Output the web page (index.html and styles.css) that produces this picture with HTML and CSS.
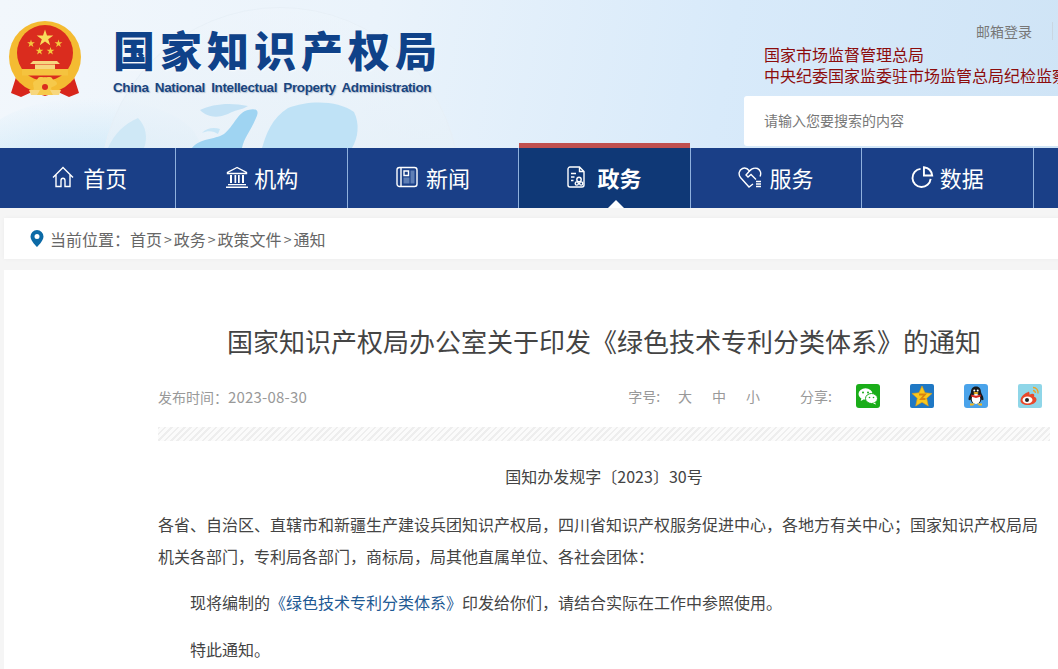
FILE: index.html
```html
<!DOCTYPE html>
<html lang="zh-CN">
<head>
    <meta charset="utf-8">
    <title>国家知识产权局办公室关于印发《绿色技术专利分类体系》的通知</title>
    <link rel="stylesheet" href="styles.css">
</head>
<body>
    <!-- Header banner -->
    <header class="banner">
        <!-- Globe picture behind the logo -->
        <svg class="globe" width="660" height="148" viewBox="0 0 660 148">
            <defs>
                <clipPath id="globe-clip"><circle cx="280" cy="187" r="180"/></clipPath>
                <radialGradient id="glow" cx="0.5" cy="1" r="1">
                    <stop offset="0" stop-color="#bfe3f7"/>
                    <stop offset="1" stop-color="#bfe3f7" stop-opacity="0"/>
                </radialGradient>
                <linearGradient id="globe-fill" x1="0" y1="0" x2="0" y2="1">
                    <stop offset="0" stop-color="#eef5fb" stop-opacity="0.5"/>
                    <stop offset="1" stop-color="#dbe9f3"/>
                </linearGradient>
            </defs>
            <ellipse cx="90" cy="148" rx="110" ry="50" fill="url(#glow)"/>
            <circle cx="280" cy="187" r="180" fill="url(#globe-fill)"/>
            <g clip-path="url(#globe-clip)">
                <path d="M192 148c8-10 22-8 32-14 10-8 14-22 24-24 8-2 12 0 8 8-6 14-12 20-14 30z" fill="#9fd4f2"/>
                <path d="M218 134c-4-3-10-4-16-1 4-5 12-6 18-4z" fill="#c8e6f7"/>
                <path d="M200 110c12-6 30-8 48-4-6 4-14 4-20 8-10 4-20 4-28-4z" fill="#c4e2f5"/>
                <path d="M262 148c4-14 10-30 26-40 20-8 50-8 66 4 6 12 4 26-2 36z" fill="#bfe2f6"/>
                <path d="M108 148c6-14 16-24 30-30 8 8 10 20 6 30z" fill="#cfe8f6"/>
            </g>
            <circle cx="280" cy="187" r="179.500" fill="none" stroke="#e6eff6" stroke-opacity="0.8"/>
        </svg>
        <div class="wrap banner-inner">
            <div class="logo">
                <svg class="emblem" width="76" height="78" viewBox="7 20 76 78">
                    <path d="M17 74 L11 93 L21 97 L32 92 L45 96 L58 92 L69 97 L79 93 L73 74Z" fill="#d8261c"/>
                    <circle cx="45" cy="57" r="36" fill="#f4bb32"/>
                    <circle cx="45" cy="53" r="28" fill="#da2c1e"/>
                    <path d="M45 29.500l2 6h6.300l-5.100 3.700 2 6-5.200-3.700-5.200 3.700 2-6-5.100-3.700h6.300z" fill="#f8dc5c"/>
                    <path d="M31 39.500l.9 2.800h3l-2.400 1.800.9 2.800-2.400-1.700-2.400 1.700.9-2.800-2.400-1.800h3z" fill="#f3c83e"/>
                    <path d="M58.500 39.500l.9 2.800h3l-2.400 1.800.9 2.800-2.400-1.700-2.400 1.700.9-2.800-2.400-1.800h3z" fill="#f3c83e"/>
                    <path d="M39.500 47l.9 2.800h3L41 51.600l.9 2.800-2.400-1.700-2.400 1.700.9-2.800-2.400-1.800h3z" fill="#f3c83e"/>
                    <path d="M50.500 47l.9 2.800h3L52 51.600l.9 2.800-2.400-1.700-2.400 1.700.9-2.800-2.400-1.800h3z" fill="#f3c83e"/>
                    <path d="M33 61h24l3 3H30zM35 64.500h20V69H35z" fill="#f7d77e"/>
                    <path d="M22 69h46v6.500H22z" fill="#f5c33f"/>
                    <path d="M17 74c6 7 16 11 28 11s22-4 28-11l1 5c-7 6-17 10-29 10s-22-4-29-10z" fill="#f4bb32"/>
                    <path d="M33 84c0-4 4-3 5-6 2-2 5 0 7-1 2 1 5-1 7 1 1 3 5 2 5 6-2 3-5 2-6 4 1 3 2 5 3 7H31c1-2 2-4 3-7-1-2 0-1-1-4z" fill="#f6c94a"/>
                    <path d="M29 90h11l-3 5h-6zM61 90H50l3 5h6z" fill="#f7d77e"/>
                    <circle cx="45" cy="87" r="3" fill="#da2c1e"/>
                </svg>
                <div class="logo-text">
                    <div class="logo-cn">国家知识产权局</div>
                    <div class="logo-en">China National Intellectual Property Administration</div>
                </div>
            </div>
            <div class="banner-right">
                <div class="login"><a class="login-link">邮箱登录</a></div>
                <div class="org">国家市场监督管理总局</div>
                <div class="org org-long">中央纪委国家监委驻市场监管总局纪检监察组</div>
                <div class="search">请输入您要搜索的内容</div>
            </div>
        </div>
    </header>

    <!-- Main navigation -->
    <nav class="nav">
        <ul class="wrap nav-list">
            <li class="nav-item">
                <svg class="nav-icon icon-home" width="22" height="24" viewBox="0 0 22 24"><path d="M1 12.500 11 2.500l10 10M4 10v11.500h5v-6c0-1.300.8-2.200 2-2.200s2 .9 2 2.200v6h5V10"/></svg>
                首页
            </li>
            <li class="nav-item">
                <svg class="nav-icon icon-bank" width="24" height="24" viewBox="0 0 24 24"><path d="M12 2.500 2.500 7.500v1h19v-1z"/><path class="icon-solid" d="M5 10h2v8H5zM9.500 10h1.700v8H9.500zM13 10h1.700v8H13zM17 10h2v8h-2zM3 19h18v1.300H3zM1 21.500h22V23H1z"/></svg>
                机构
            </li>
            <li class="nav-item">
                <svg class="nav-icon icon-news" width="22" height="24" viewBox="0 0 22 24"><rect x="1" y="2.500" width="20" height="19" rx="2.500"/><path d="M5 2.500v19"/><path d="M8 6h4.500v4.500H8z"/><path class="icon-fill" d="M14.500 5.500h4v13h-4zM7.500 12.500h6v6h-6z"/></svg>
                新闻
            </li>
            <li class="nav-item nav-active">
                <svg class="nav-icon icon-doc" width="18" height="22" viewBox="0 0 18 22"><path d="M12.500 1H3C2 1 1 2 1 3v16c0 1 1 2 2 2h12c1 0 2-1 2-2V5.500zM12.500 1v4.500H17M4 7.500h5M4 11h3.500M4 14.500h2.500"/><circle cx="12" cy="13.500" r="2.200"/><circle cx="9.800" cy="17.500" r="1.600"/><circle cx="14.200" cy="17.500" r="1.600"/></svg>
                政务
                <span class="nav-arrow"></span>
            </li>
            <li class="nav-item">
                <svg class="nav-icon icon-heart" width="24" height="22" viewBox="0 0 24 22"><path d="M15 18 11 21 2.500 11.500C0 8.500 1 4 4.500 2.500 7 1.500 9.500 2.500 11.500 5c2-2.500 5.500-3.500 8-2.500 3 1.300 4 5 2.500 8"/><path d="M11.500 5 8 9l2 2 3-2.500 5 5M18 15.500h5M18 18h5M18 20.500h5"/></svg>
                服务
            </li>
            <li class="nav-item">
                <svg class="nav-icon icon-thick icon-pie" width="23" height="24" viewBox="0 0 24 24"><path d="M10 3.500a9.500 9.500 0 1 0 10.500 10.500"/><path d="M13.500 1.800c4.500.6 8 4 8.600 8.700h-8.600z"/></svg>
                数据
            </li>
            <li class="nav-item">互动</li>
        </ul>
    </nav>

    <!-- Breadcrumb -->
    <div class="wrap crumb">
        <svg class="pin" width="14" height="17" viewBox="0 0 14 17"><path fill-rule="evenodd" d="M7 0a6.500 6.500 0 0 1 6.500 6.500C13.500 11 7 17 7 17S.5 11 .5 6.500A6.500 6.500 0 0 1 7 0zm0 4a2.500 2.500 0 1 0 0 5 2.500 2.500 0 0 0 0-5z"/></svg>
        <span class="crumb-label">当前位置：</span>
        <a>首页</a><i>&gt;</i><a>政务</a><i>&gt;</i><a>政策文件</a><i>&gt;</i><a>通知</a>
    </div>

    <!-- Article -->
    <main class="wrap article">
        <h1 class="title">国家知识产权局办公室关于印发《绿色技术专利分类体系》的通知</h1>
        <div class="meta">
            <span class="date">发布时间：<span class="date-num">2023-08-30</span></span>
            <div class="tools">
                <span class="size-label">字号:</span>
                <span class="size">大</span><span class="size">中</span><span class="size">小</span>
                <span class="share-label">分享:</span>
                <svg class="share" width="24" height="24" viewBox="0 0 24 24">
                    <rect width="24" height="24" rx="3" fill="#1aad19"/>
                    <ellipse cx="9.500" cy="10" rx="7" ry="5.800" fill="#fff"/>
                    <path d="M5.500 14l-.8 3 3-1.500z" fill="#fff"/>
                    <ellipse cx="15.500" cy="14.500" rx="6" ry="5" fill="#fff" stroke="#1aad19"/>
                    <path d="M19 18.500l1 2-3-1z" fill="#fff"/>
                    <circle cx="7" cy="8.500" r="1" fill="#1aad19"/><circle cx="12" cy="8.500" r="1" fill="#1aad19"/>
                    <circle cx="13.500" cy="13.500" r=".8" fill="#1aad19"/><circle cx="17.500" cy="13.500" r=".8" fill="#1aad19"/>
                </svg>
                <svg class="share" width="24" height="24" viewBox="0 0 24 24">
                    <rect width="24" height="24" rx="2" fill="#1f78c4"/>
                    <path d="M12 2l3 6.800 7 .7-5.300 4.700L18.300 22 12 18.200 5.700 22l1.600-7.800L2 9.500l7-.7z" fill="#f8c81e" stroke="#e09a14" stroke-width=".6"/>
                    <path d="M9 10.500h6l-4 4.500h4.500" fill="none" stroke="#d9820f" stroke-width="1.800"/>
                </svg>
                <svg class="share" width="24" height="24" viewBox="0 0 24 24">
                    <rect width="24" height="24" rx="3" fill="#4aa3ea"/>
                    <path d="M12 2.500c-3.500 0-5 2.500-5 5.500 0 1.500-2.500 4-2.500 7 0 1.500 1 1.500 2 .5.500 2 1.500 3 2 3.500h7c.500-.5 1.500-1.500 2-3.500 1 1 2 1 2-.5 0-3-2.500-5.500-2.500-7 0-3-1.500-5.500-5-5.500z" fill="#17191c"/>
                    <ellipse cx="12" cy="15" rx="4.300" ry="5" fill="#fff"/>
                    <path d="M7.500 10.500c3 1.500 6 1.500 9 0l.5 2-5 1.500-5-1.500z" fill="#d8281e"/>
                    <ellipse cx="12" cy="9" rx="2.500" ry="1" fill="#f5b81c"/>
                    <path d="M6 19.500h5l-2 2H6zM13 19.500h5v2h-3z" fill="#f5b81c"/>
                    <circle cx="10.300" cy="6.500" r="1" fill="#fff"/><circle cx="13.700" cy="6.500" r="1" fill="#fff"/>
                </svg>
                <svg class="share" width="24" height="24" viewBox="0 0 24 24">
                    <rect width="24" height="24" rx="2" fill="#8fd6e8"/>
                    <path d="M10.500 8c-4 1-8 5-8 8.500 0 2.500 3 4.500 7.500 4.500s8.500-2.500 8.500-5.500c0-1.500-1.500-2.500-2.500-2.700.7-1.800 0-3-1.500-3-1 0-2 .5-3 1 .3-2-.5-3.500-1-3.300z" fill="#e8482a"/>
                    <ellipse cx="9.500" cy="16" rx="5" ry="3.500" fill="#fff"/>
                    <circle cx="9" cy="16" r="2" fill="#222"/>
                    <path d="M15 3.500c3 0 5.500 2.500 5 6M15 6.500c1.500 0 2.500 1 2.300 2.500" fill="none" stroke="#f0a020" stroke-width="1.300"/>
                </svg>
            </div>
        </div>
        <div class="hatch"></div>
        <div class="body">
            <p class="doc-no">国知办发规字〔2023〕30号</p>
            <p class="para para-first">各省、自治区、直辖市和新疆生产建设兵团知识产权局，四川省知识产权服务促进中心，各地方有关中心；国家知识产权局局机关各部门，专利局各部门，商标局，局其他直属单位、各社会团体：</p>
            <p class="para indent para-second">现将编制的<a class="link">《绿色技术专利分类体系》</a>印发给你们，请结合实际在工作中参照使用。</p>
            <p class="para indent">特此通知。</p>
        </div>
    </main>
</body>
</html>
```

FILE: styles.css
```css
html, body {
    margin: 0;
    padding: 0;
    overflow: hidden;
    height: 669px;
}

body {
    background-color: #f5f5f5;
    color: #555;
    font-family: "Noto Sans CJK SC", "Liberation Sans", sans-serif;
    font-size: 16px;
}

/* Site is 1200 wide and starts 4px in */
.wrap {
    width: 1200px;
    margin-left: 4px;
    box-sizing: border-box;
}

/* Header banner */
.banner {
    position: relative;
    height: 148px;
    background: linear-gradient(100deg, #f2f7fc 0%, #eaf3fb 35%, #d8eafa 68%, #cfe4f6 100%);
}

.globe {
    position: absolute;
    left: 0;
    top: 0;
}

.banner-inner {
    position: relative;
    display: flex;
    justify-content: space-between;
    height: 148px;
}

.logo {
    display: flex;
    align-items: flex-start;
}

.emblem {
    margin-top: 20px;
    margin-left: 3px;
}

.logo-text {
    margin-left: 30px;
    margin-top: 22px;
}

.logo-cn {
    font-size: 42px;
    line-height: 54px;
    font-weight: 900;
    letter-spacing: 5px;
    color: #0f4289;
    text-shadow: 1px 1px 2px rgba(255, 255, 255, 0.7);
}

.logo-en {
    font-family: "Liberation Sans", Arial, sans-serif;
    font-size: 13.500px;
    line-height: 18px;
    font-weight: bold;
    color: #19457f;
    letter-spacing: -0.400px;
    word-spacing: 3px;
    margin-top: 3px;
    white-space: nowrap;
    text-shadow: 1px 1px 1px rgba(20, 50, 100, 0.25);
}

.banner-right {
    width: 460px;
}

.login {
    height: 44px;
    padding-left: 232px;
    padding-top: 22px;
    box-sizing: border-box;
    font-size: 14px;
    line-height: 18px;
    color: #777;
}

.login-link {
    display: inline-block;
    padding-right: 20px;
    border-right: 1px solid #c9d6e2;
}

.org {
    padding-left: 20px;
    font-size: 16px;
    line-height: 21px;
    color: #8c0c0c;
    white-space: nowrap;
}

.search {
    height: 50px;
    margin-top: 10px;
    padding-left: 20px;
    background-color: #fff;
    border-radius: 3px 0 0 3px;
    font-size: 14px;
    line-height: 48px;
    color: #777;
}

/* Main navigation */
.nav {
    height: 60px;
    background-color: #1a3f87;
}

.nav-list {
    display: grid;
    grid-template-columns: repeat(7, 1fr);
    list-style-type: none;
    padding: 0;
    margin-top: 0;
    margin-bottom: 0;
    height: 60px;
}

.nav-item {
    position: relative;
    display: flex;
    align-items: center;
    justify-content: center;
    box-sizing: border-box;
    padding-bottom: 2px;
    color: #fff;
    font-size: 22px;
    border-left: 1px solid #8fb0dd;
}

.nav-item:first-child {
    border-left: none;
}

.nav-icon {
    fill: none;
    stroke: #fff;
    stroke-width: 1.400;
}

.icon-solid {
    fill: #fff;
    stroke: none;
}

.icon-fill {
    fill: #5f7fb5;
    stroke: none;
}

.icon-thick {
    stroke-width: 2;
}

.icon-home { margin-right: 9px; }
.icon-bank { margin-right: 5px; }
.icon-news { margin-right: 8px; }
.icon-doc { margin-right: 12px; }
.icon-heart { margin-right: 7px; }
.icon-pie { margin-right: 6px; }

.nav-active {
    background-color: #0f3876;
    font-weight: bold;
}

.nav-active::before {
    content: "";
    position: absolute;
    left: 0;
    right: 0;
    top: -5px;
    height: 5px;
    background-color: #c0504f;
}

.nav-arrow {
    position: absolute;
    left: 50%;
    bottom: 0;
    margin-left: 4px;
    border-left: 8px solid transparent;
    border-right: 8px solid transparent;
    border-bottom: 8px solid #fff;
}

/* Breadcrumb */
.crumb {
    display: flex;
    align-items: center;
    height: 41px;
    margin-top: 10px;
    padding-left: 26px;
    background-color: #fff;
    box-shadow: 0 0 4px rgba(0, 0, 0, 0.04);
    font-size: 16px;
    color: #666;
}

.pin {
    fill: #0c6aa6;
    margin-right: 6px;
}

.crumb i {
    font-style: normal;
    font-size: 14px;
    margin: 0 2px;
}

/* Article */
.article {
    margin-top: 11px;
    height: 420px;
    padding: 0 154px;
    background-color: #fff;
}

.title {
    margin: 0;
    padding-top: 51px;
    font-size: 26px;
    line-height: 40px;
    font-weight: normal;
    color: #444;
    text-align: center;
}

.meta {
    display: flex;
    justify-content: space-between;
    align-items: center;
    margin-top: 20px;
    height: 30px;
    font-size: 14px;
    color: #999;
}

.date-num {
    font-size: 15px;
    letter-spacing: 0.200px;
}

.tools {
    display: flex;
    align-items: center;
}

.size-label {
    margin-right: -2px;
}

.size {
    margin-left: 20px;
    width: 14px;
}

.share-label {
    margin-left: 40px;
    margin-right: 10px;
}

.share {
    margin-left: 14px;
    margin-right: 16px;
}

.share:last-child {
    margin-right: 8px;
}

.hatch {
    height: 14px;
    margin-top: 16px;
    background: repeating-linear-gradient(135deg, #eeeeee 0, #eeeeee 1.800px, #fbfbfb 1.800px, #fbfbfb 4.500px);
}

.body {
    margin-top: 19px;
    color: #444;
}

.body p {
    margin: 0;
    line-height: 32px;
}

.doc-no {
    text-align: center;
}

.para {
    padding-top: 15px;
}

.para-first {
    padding-top: 16px;
}

.para-second {
    padding-top: 14px;
}

.indent {
    text-indent: 32px;
}

.link {
    color: #1f5a94;
}
```
